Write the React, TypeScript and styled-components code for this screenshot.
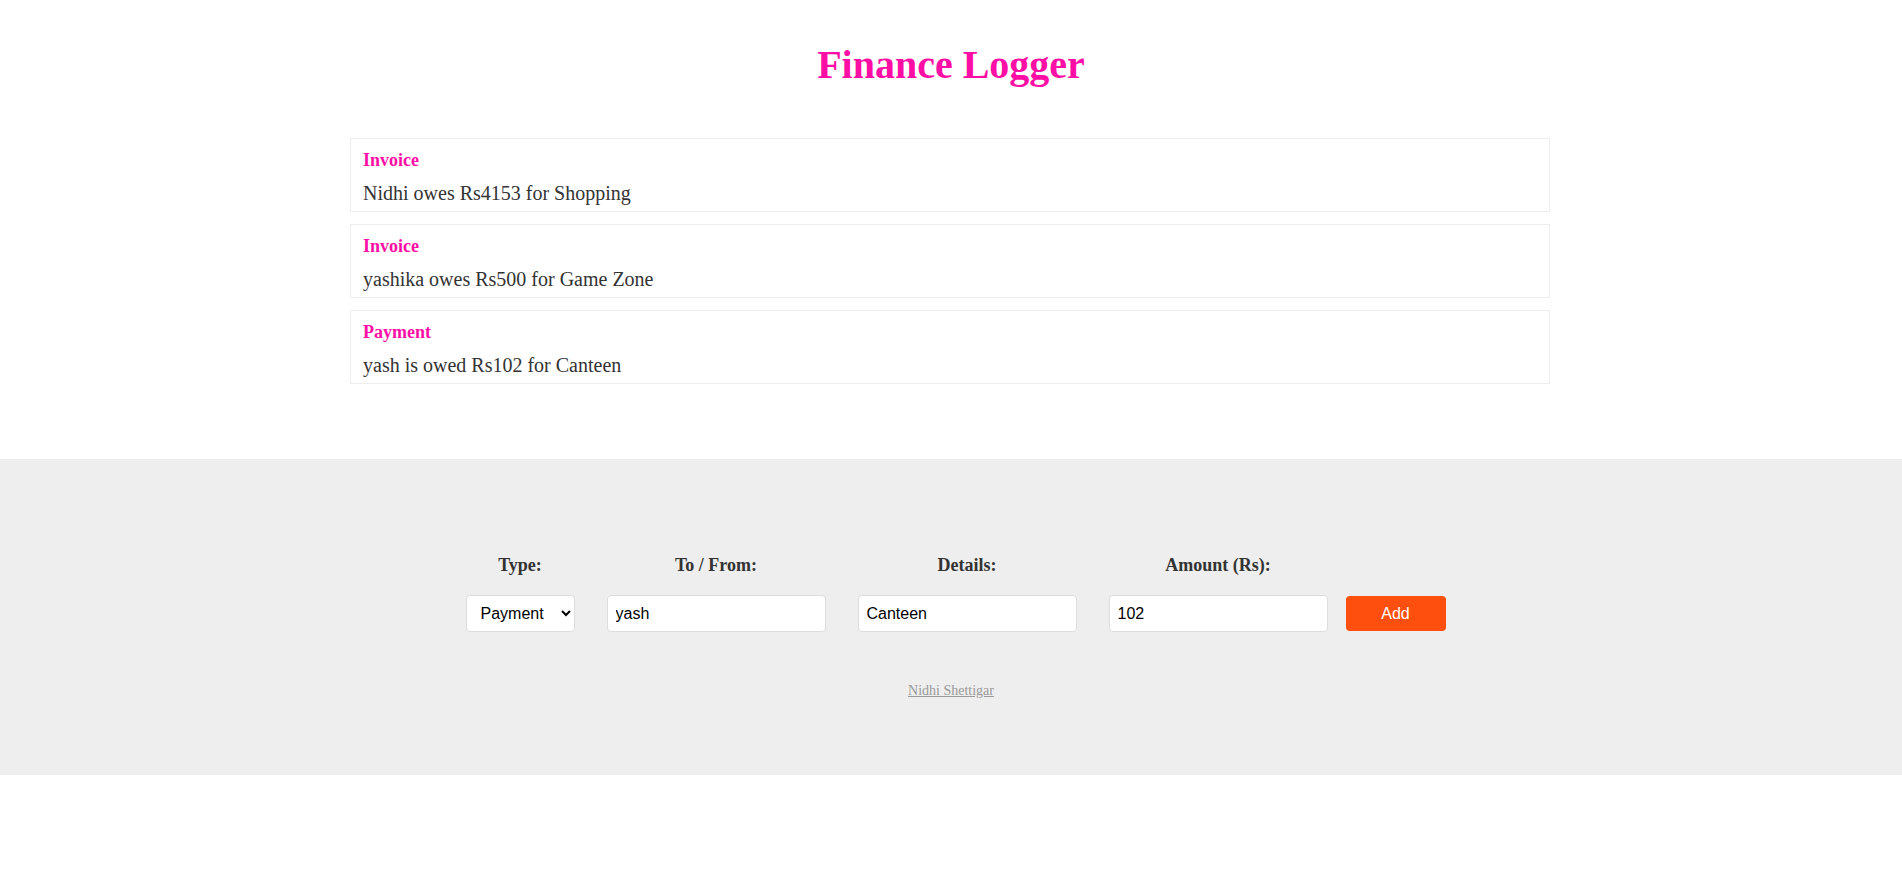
import React, { useState } from "react";
import styled, { createGlobalStyle } from "styled-components";

const GlobalStyle = createGlobalStyle`
  html, body { margin: 0; padding: 0; background: #fff; }
  body { font-family: "Liberation Serif", "Times New Roman", serif; color: #333; }
  * { box-sizing: border-box; }
`;

const Header = styled.header`
  padding-top: 42px;
  text-align: center;
`;

const Title = styled.h1`
  margin: 0;
  font-size: 40px;
  line-height: 46px;
  font-weight: bold;
  color: #ff0ea5;
`;

const List = styled.ul`
  list-style: none;
  padding: 0;
  margin: 50px auto 0;
  max-width: 1200px;
  transform: translateX(-1px);
`;

const Card = styled.li`
  border: 1px solid #eee;
  padding: 11px 12px 6px;
  margin-bottom: 12px;
`;

const CardTitle = styled.h4`
  margin: 0 0 11px;
  font-size: 18px;
  line-height: 21px;
  color: #ff0ea5;
`;

const CardText = styled.p`
  margin: 0;
  font-size: 20px;
  line-height: 23px;
  color: #333;
`;

const Panel = styled.footer`
  margin-top: 75px;
  background: #eee;
  padding: 96px 0 76px;
`;

const Form = styled.form`
  display: flex;
  justify-content: center;
  align-items: flex-end;
  padding-left: 9px;
`;

const Fields = styled.div`
  display: flex;
  gap: 32px;
`;

const Field = styled.div`
  display: flex;
  flex-direction: column;
  align-items: center;
`;

const Label = styled.label`
  font-size: 18px;
  line-height: 21px;
  font-weight: bold;
  color: #333;
  margin-bottom: 19px;
`;

const Select = styled.select`
  width: 109px;
  height: 37px;
  padding: 0 8px 0 10px;
  font-family: "Liberation Sans", Arial, sans-serif;
  font-size: 16px;
  color: #000;
  background: #fff;
  border: 1px solid #ddd;
  border-radius: 4px;
`;

const Input = styled.input`
  width: 219px;
  height: 37px;
  padding: 0 8px;
  font-family: "Liberation Sans", Arial, sans-serif;
  font-size: 16px;
  color: #000;
  background: #fff;
  border: 1px solid #ddd;
  border-radius: 4px;
  outline: none;
`;

const AddButton = styled.button`
  margin-left: 18px;
  margin-bottom: 1px;
  width: 100px;
  height: 35px;
  border: none;
  border-radius: 4px;
  background: #ff4f0e;
  color: #fff;
  font-family: "Liberation Sans", Arial, sans-serif;
  font-size: 16px;
  cursor: pointer;
`;

const Credit = styled.p`
  margin: 51px 0 0;
  text-align: center;
  font-size: 14px;
  line-height: 16px;
`;

const CreditLink = styled.a`
  color: #999;
  text-decoration: underline;
`;

type Entry = { kind: string; text: string };

const entries: Entry[] = [
  { kind: "Invoice", text: "Nidhi owes Rs4153 for Shopping" },
  { kind: "Invoice", text: "yashika owes Rs500 for Game Zone" },
  { kind: "Payment", text: "yash is owed Rs102 for Canteen" },
];

export default function App() {
  const [type, setType] = useState("payment");
  const [tofrom, setTofrom] = useState("yash");
  const [details, setDetails] = useState("Canteen");
  const [amount, setAmount] = useState("102");

  return (
    <>
      <GlobalStyle />
      <Header>
        <Title>Finance Logger</Title>
      </Header>
      <List>
        {entries.map((e, i) => (
          <Card key={i}>
            <CardTitle>{e.kind}</CardTitle>
            <CardText>{e.text}</CardText>
          </Card>
        ))}
      </List>
      <Panel>
        <Form onSubmit={(ev) => ev.preventDefault()}>
          <Fields>
            <Field>
              <Label>Type:</Label>
              <Select value={type} onChange={(e) => setType(e.target.value)}>
                <option value="invoice">Invoice</option>
                <option value="payment">Payment</option>
              </Select>
            </Field>
            <Field>
              <Label>To / From:</Label>
              <Input value={tofrom} onChange={(e) => setTofrom(e.target.value)} />
            </Field>
            <Field>
              <Label>Details:</Label>
              <Input value={details} onChange={(e) => setDetails(e.target.value)} />
            </Field>
            <Field>
              <Label>Amount (Rs):</Label>
              <Input value={amount} onChange={(e) => setAmount(e.target.value)} />
            </Field>
          </Fields>
          <AddButton type="submit">Add</AddButton>
        </Form>
        <Credit>
          <CreditLink href="#">Nidhi Shettigar</CreditLink>
        </Credit>
      </Panel>
    </>
  );
}
